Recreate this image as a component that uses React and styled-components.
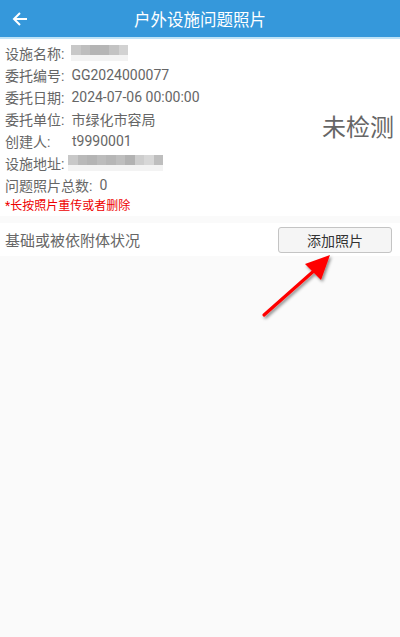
import React from 'react';
import styled, { createGlobalStyle } from 'styled-components';

const GlobalStyle = createGlobalStyle`
    html, body {
        margin: 0;
        padding: 0;
        background: #fafafa;
        font-family: Roboto, "Noto Sans CJK SC", sans-serif;
    }
`;

const info = [
    { label: '设施名称:', blur: [200, 190, 180, 182, 195, 210] },
    { label: '委托编号:', value: 'GG2024000077' },
    { label: '委托日期:', value: '2024-07-06 00:00:00' },
    { label: '委托单位:', value: '市绿化市容局' },
    { label: '创建人:', value: 't9990001', wide: true },
    { label: '设施地址:', blur: [200, 185, 180, 188, 182, 190, 178, 205, 215, 190], short: true },
    { label: '问题照片总数:', value: '0' },
];

const App = () => (
    <>
        <GlobalStyle />
        <Page>
            <Header>
                <BackIcon viewBox="0 0 16 16">
                    <path d="M15 8H2M8 2L2 8l6 6" fill="none" stroke="#fff" strokeWidth="2" />
                </BackIcon>
                <Title>户外设施问题照片</Title>
            </Header>

            <InfoCard>
                <InfoList>
                    {info.map((row) => (
                        <Row key={row.label}>
                            <Label $wide={row.wide} $short={row.short}>{row.label}</Label>
                            {row.value && <Value>{row.value}</Value>}
                            {row.blur && (
                                <Blur>
                                    {row.blur.map((g, i) => (
                                        <BlurCell key={i} style={{ background: `rgb(${g},${g},${g})` }} />
                                    ))}
                                </Blur>
                            )}
                        </Row>
                    ))}
                    <Hint>*长按照片重传或者删除</Hint>
                </InfoList>
                <Status>未检测</Status>
            </InfoCard>

            <Section>
                <SectionTitle>基础或被依附体状况</SectionTitle>
                <AddButton>添加照片</AddButton>
                <Arrow width="90" height="80" viewBox="0 0 90 80">
                    <defs>
                        <filter id="sh" x="-20%" y="-20%" width="140%" height="140%">
                            <feDropShadow dx="1.5" dy="2" stdDeviation="1.5" floodColor="#000" floodOpacity="0.45" />
                        </filter>
                    </defs>
                    <g filter="url(#sh)">
                        <path d="M8 72L60 26" stroke="#f00" strokeWidth="3.2" strokeLinecap="round" />
                        <path d="M74 12L49 21L65 37Z" fill="#f00" />
                    </g>
                </Arrow>
            </Section>
        </Page>
    </>
);

export default App;

const Page = styled.div`
    width: 400px;
    min-height: 637px;
    background: #fafafa;
`;

const Header = styled.header`
    position: relative;
    height: 37px;
    background: #3598db;
    border-bottom: 2px solid #bfe3f7;
    display: flex;
    align-items: center;
    justify-content: center;
`;

const BackIcon = styled.svg`
    position: absolute;
    left: 12px;
    top: 11px;
    width: 16px;
    height: 16px;
`;

const Title = styled.h1`
    margin: 0;
    font-size: 16.5px;
    font-weight: normal;
    color: #fff;
`;

const InfoCard = styled.div`
    background: #fff;
    display: flex;
    justify-content: space-between;
    align-items: center;
    padding: 3px 6px 3px 5px;
`;

const InfoList = styled.div`
    display: flex;
    flex-direction: column;
`;

const Row = styled.div`
    display: flex;
    align-items: center;
    height: 22px;
    font-size: 14px;
    color: #666;
`;

const Label = styled.span`
    width: ${(p) => (p.$wide ? '60px' : 'auto')};
    margin-right: ${(p) => (p.$short ? '4px' : '7px')};
`;

const Value = styled.span`
    color: #666;
`;

const Blur = styled.div`
    display: flex;
    flex-direction: row;
    height: 10px;
    border-bottom: 6px solid #f3f3f3;
`;

const BlurCell = styled.div`
    width: 9.5px;
    height: 10px;
`;

const Hint = styled.div`
    font-size: 12px;
    color: #e00;
    height: 17px;
    display: flex;
    align-items: center;
`;

const Status = styled.div`
    font-size: 24px;
    color: #666;
    margin-bottom: 4px;
`;

const Section = styled.div`
    position: relative;
    margin-top: 7px;
    height: 33px;
    background: #fff;
    display: flex;
    align-items: center;
    justify-content: space-between;
    padding: 0 8px 0 5px;
`;

const SectionTitle = styled.span`
    font-size: 15px;
    color: #666;
`;

const AddButton = styled.button`
    width: 114px;
    height: 26px;
    border: 1px solid #c4c4c4;
    border-radius: 3px;
    background: #f5f5f5;
    font-family: Roboto, "Noto Sans CJK SC", sans-serif;
    font-size: 14px;
    color: #333;
    padding: 0;
`;

const Arrow = styled.svg`
    position: absolute;
    left: 256px;
    top: 20px;
    overflow: visible;
`;
